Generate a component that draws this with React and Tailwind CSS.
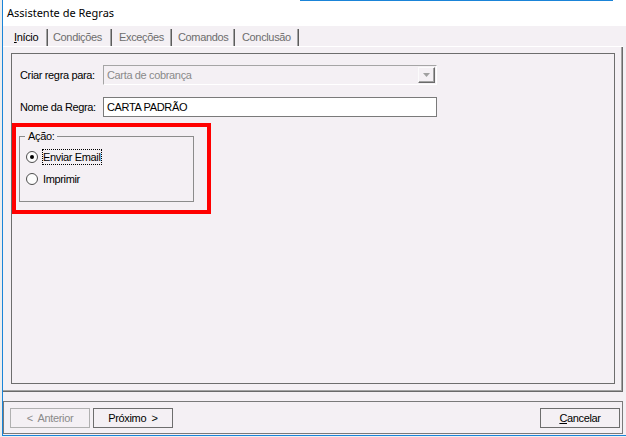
import React from 'react';

const Sep = () => (
  <div className="flex h-full">
    <div className="w-px bg-[#a3a3a3]" />
    <div className="w-px bg-[#5c5c5c]" />
  </div>
);

const Radio = ({ checked }) => (
  <div className="w-[12px] h-[12px] rounded-full border-[1.5px] border-[#4d4d4d] bg-[#fcfcfc] flex items-center justify-center">
    {checked && <div className="w-[4px] h-[4px] rounded-full bg-black" />}
  </div>
);

const App = () => {
  return (
    <div className="w-[626px] h-[437px] flex bg-[#f0f0f0] overflow-hidden font-['Liberation_Sans',Arial,sans-serif] text-[11px] tracking-[-0.35px] text-black">
      {/* strip of the desktop behind the window */}
      <div className="w-[2px] bg-[#ededed]" />

      <div className="flex-1 h-[436px] flex flex-col border-l border-b border-[#1a84d8] bg-[#f4f0f4]">
        {/* title bar */}
        <div className="h-[26px] bg-white flex flex-col">
          <div className="h-px flex">
            <div className="w-[297px]" />
            <div className="w-[313px] bg-[#1a84d8]" />
          </div>
          <div className="flex-1 flex items-center pl-[4px] pb-[1px] font-['Noto_Sans',sans-serif] text-[11px] tracking-normal text-black">
            Assistente de Regras
          </div>
        </div>

        {/* tabs header */}
        <div className="h-[21px] flex flex-col pt-[3px]">
          <div className="h-[17px] flex">
            <div className="flex h-full">
              <span className="w-[43px] pl-[11px] flex items-center">
                <span className="underline">I</span>nício
              </span>
              <Sep />
            </div>
            <div className="flex h-full text-[#6d6d6d]">
              <span className="w-[62px] pl-[5px] flex items-center">Condições</span>
              <Sep />
            </div>
            <div className="flex h-full text-[#6d6d6d]">
              <span className="w-[58px] pl-[7px] flex items-center">Exceções</span>
              <Sep />
            </div>
            <div className="flex h-full text-[#6d6d6d]">
              <span className="w-[61px] pl-[6px] flex items-center">Comandos</span>
              <Sep />
            </div>
            <div className="flex h-full text-[#6d6d6d]">
              <span className="w-[62px] pl-[7px] flex items-center">Conclusão</span>
              <Sep />
            </div>
          </div>
          <div className="h-px w-[620px] bg-white" />
        </div>

        {/* tab page */}
        <div className="w-[620px] h-[345px] border-r border-b border-[#6a6a6a]">
          <div className="h-full border-r border-b border-[#a3a3a3] pl-[8px] pr-[6px] pt-[6px] pb-[6px]">
            <div className="h-full border border-[#6d6d6d] flex flex-col">
              <div className="mt-[11px] flex items-center pl-[8px]">
                <span className="w-[83px]">Criar regra para:</span>
                <div className="w-[334px] h-[20px] flex border-t border-l border-[#a5a5a5] border-b-white border-r-white border-b border-r">
                  <div className="flex-1 flex items-center pl-[3px] text-[#8a8a8a]">Carta de cobrança</div>
                  <div className="w-[17px] my-px mr-px flex border-t border-l border-t-[#fbfbfb] border-l-[#fbfbfb] border-b border-r border-b-[#6a6a6a] border-r-[#6a6a6a]">
                    <div className="flex-1 flex items-center justify-center border-b border-r border-[#a3a3a3]">
                      <svg width="7" height="4" viewBox="0 0 7 4">
                        <polygon points="0,0 7,0 3.5,4" fill="#a0a0a0" />
                      </svg>
                    </div>
                  </div>
                </div>
              </div>

              <div className="mt-[12px] flex items-center pl-[8px]">
                <span className="w-[83px]">Nome da Regra:</span>
                <div className="w-[334px] h-[20px] flex items-center pl-[3px] border border-[#7a7a7a] bg-white">
                  CARTA PADRÃO
                </div>
              </div>

              <div className="mt-[6px] w-[199px] border-4 border-[#ff0000] pt-[3px] pl-[3px] pb-[8px]">
                <fieldset className="w-[175px] border border-[#8c8c8c] p-0">
                  <legend className="ml-[5px] px-[3px] leading-[13px]">Ação:</legend>
                  <div className="flex flex-col gap-[6px] pt-[6px] pb-[14px] pl-[6px]">
                    <div className="h-[16px] flex items-center">
                      <Radio checked />
                      <span className="ml-[4px] h-[16px] flex items-center border border-dotted border-black">
                        Enviar Email
                      </span>
                    </div>
                    <div className="h-[16px] flex items-center">
                      <Radio />
                      <span className="ml-[4px] h-[16px] flex items-center border border-transparent">
                        Imprimir
                      </span>
                    </div>
                  </div>
                </fieldset>
              </div>
            </div>
          </div>
        </div>

        {/* bottom buttons */}
        <div className="mt-[9px] w-[620px] h-[33px] border border-[#7a7a7a] flex items-start pt-[6px] pl-[6px] pr-[2px]">
          <button className="w-[80px] h-[20px] border border-[#b0b0b0] text-[#8a8a8a] flex items-center justify-center">
            &lt;&nbsp; Anterior
          </button>
          <button className="ml-[3px] w-[80px] h-[20px] border border-[#6d6d6d] flex items-center justify-center">
            Próximo &nbsp;&gt;
          </button>
          <div className="flex-1" />
          <button className="w-[80px] h-[20px] border border-[#6d6d6d] flex items-center justify-center">
            <span className="underline">C</span>ancelar
          </button>
        </div>
      </div>
    </div>
  );
};

export default App;
